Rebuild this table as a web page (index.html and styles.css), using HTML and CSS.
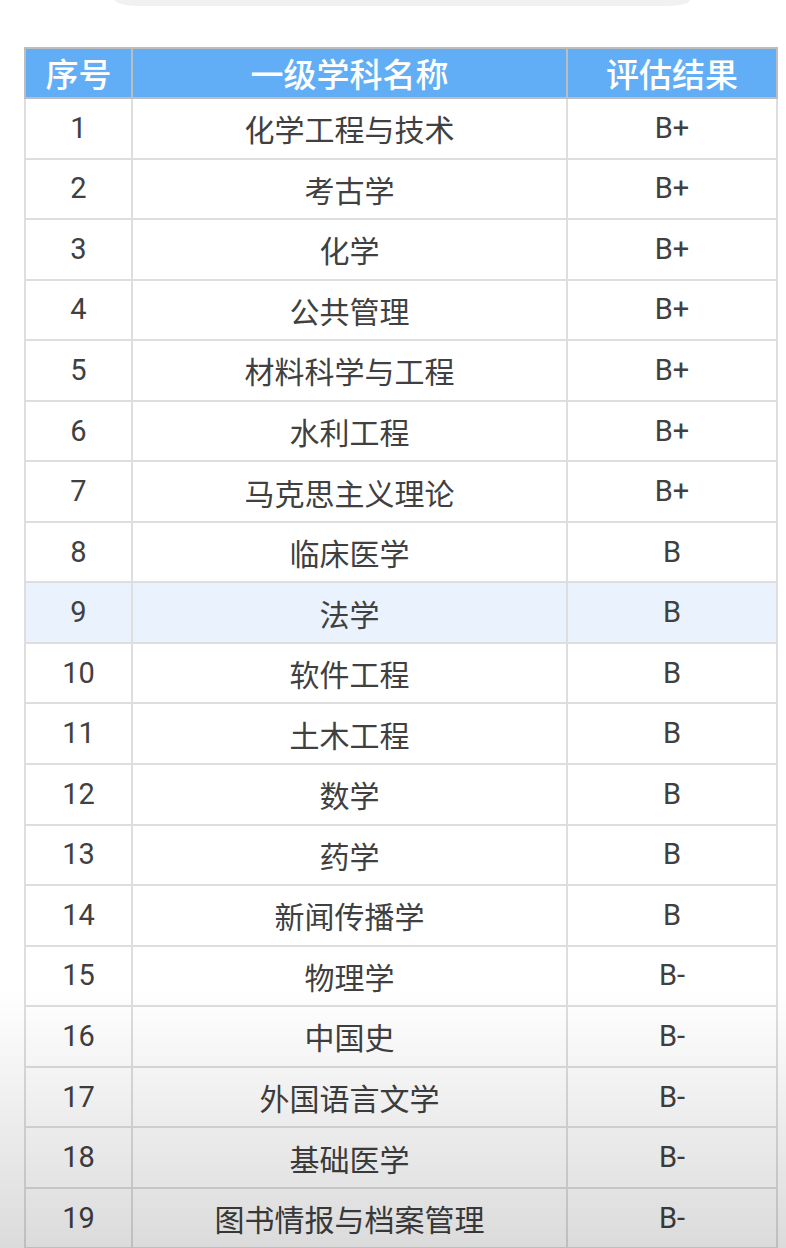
FILE: index.html
```html
<!DOCTYPE html>
<html lang="zh-CN">
<head>
<meta charset="utf-8">
<title>学科评估结果</title>
<link rel="stylesheet" href="styles.css">
</head>
<body>
<div class="page">
  <div class="top-card"></div>
  <table class="grades">
    <colgroup>
      <col class="c-no">
      <col class="c-name">
      <col class="c-grade">
    </colgroup>
    <thead>
      <tr><th>序号</th><th>一级学科名称</th><th>评估结果</th></tr>
    </thead>
    <tbody>
      <tr><td>1</td><td>化学工程与技术</td><td>B+</td></tr>
      <tr><td>2</td><td>考古学</td><td>B+</td></tr>
      <tr><td>3</td><td>化学</td><td>B+</td></tr>
      <tr><td>4</td><td>公共管理</td><td>B+</td></tr>
      <tr><td>5</td><td>材料科学与工程</td><td>B+</td></tr>
      <tr><td>6</td><td>水利工程</td><td>B+</td></tr>
      <tr><td>7</td><td>马克思主义理论</td><td>B+</td></tr>
      <tr><td>8</td><td>临床医学</td><td>B</td></tr>
      <tr class="hl"><td>9</td><td>法学</td><td>B</td></tr>
      <tr><td>10</td><td>软件工程</td><td>B</td></tr>
      <tr><td>11</td><td>土木工程</td><td>B</td></tr>
      <tr><td>12</td><td>数学</td><td>B</td></tr>
      <tr><td>13</td><td>药学</td><td>B</td></tr>
      <tr><td>14</td><td>新闻传播学</td><td>B</td></tr>
      <tr><td>15</td><td>物理学</td><td>B-</td></tr>
      <tr><td>16</td><td>中国史</td><td>B-</td></tr>
      <tr><td>17</td><td>外国语言文学</td><td>B-</td></tr>
      <tr><td>18</td><td>基础医学</td><td>B-</td></tr>
      <tr><td>19</td><td>图书情报与档案管理</td><td>B-</td></tr>
    </tbody>
  </table>
</div>
<div class="shade"></div>
</body>
</html>
```
FILE: styles.css
```css
html, body {
  margin: 0;
  padding: 0;
  background: #ffffff;
}
body {
  width: 786px;
  height: 1248px;
  overflow: hidden;
  font-family: Roboto, "Noto Sans CJK SC", sans-serif;
  color: #404040;
}
.page {
  padding: 0 10px 0 24px;
}
.top-card {
  width: 575px;
  height: 6px;
  margin: 0 0 41px 91px;
  background: #f1f1f1;
  border-radius: 0 0 24px 24px / 0 0 6px 6px;
}
.grades {
  width: 752px;
  border-collapse: collapse;
  table-layout: fixed;
}
.c-no { width: 107px; }
.c-name { width: 435px; }
.c-grade { width: 210px; }
.grades th {
  height: 48px;
  padding: 0;
  background: #62aef6;
  color: #ffffff;
  font-family: "Noto Sans CJK SC", sans-serif;
  font-weight: 500;
  font-size: 33px;
  line-height: 1;
  border: 2px solid #bdbdbd;
}
.grades td {
  height: 58.55px;
  padding: 0;
  text-align: center;
  font-size: 29px;
  line-height: 1;
  border: 2px solid #dedede;
}
.grades td:nth-child(2) {
  font-family: "Noto Sans CJK SC", sans-serif;
  font-size: 30px;
}
.grades tr.hl td {
  background: #eaf3fd;
}
.shade {
  position: fixed;
  left: 0;
  right: 0;
  bottom: 0;
  height: 260px;
  background: linear-gradient(to bottom, rgba(0,0,0,0), rgba(0,0,0,0.14));
  pointer-events: none;
}
```
